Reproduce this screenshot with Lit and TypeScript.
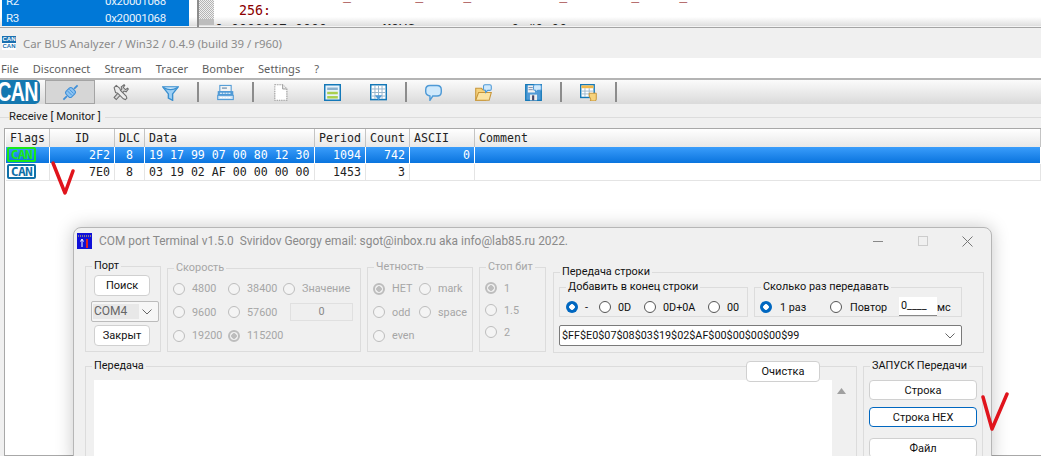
import { LitElement, html, css, svg } from "lit";
import { customElement } from "lit/decorators.js";

const radio = (label: string, state = "", cls = "") => html`<label class="opt ${cls}"><i class="radio ${state}"></i><span>${label}</span></label>`;
const btn = (label: string, cls = "") => html`<button class="btn ${cls}">${label}</button>`;

const chevron = html`<svg class="chev" width="12" height="8" viewBox="0 0 12 8"><path d="M1.5 1.5 6 6l4.5-4.5" fill="none" stroke="#666" stroke-width="1"/></svg>`;

const ICONS: Record<string, unknown> = {
  plug: svg`<path d="M2 22l5-5M17 7l5-5" stroke="#3f8fd8" stroke-width="2.4"/><rect x="6" y="6.500" width="12" height="11" rx="3" transform="rotate(-45 12 12)" fill="#8ec4f2" stroke="#3f8fd8" stroke-width="1.500"/><path d="M8 10l6 6M10.500 7.500l6 6" stroke="#3f8fd8" stroke-width="1.300" fill="none"/>`,
  tools: svg`<path d="M3 19 14 7l-1-3 4-3 1 1-2 3 3 3 3-2 1 1-3 4-3-1L6 22z" fill="#d8d8d8" stroke="#6e6e6e" stroke-width="1.500"/><path d="M3 5l3-3 5 4 1 3 8 8 1 3-2 2-3-1-8-8-3-1z" fill="#ececec" stroke="#6e6e6e" stroke-width="1.500"/>`,
  funnel: svg`<path d="M1 4h22l-8 10v9l-6-3v-6z" fill="#9ed0f5" stroke="#3a8fcf" stroke-width="2"/><path d="M2 5q10 6 20 0" fill="#d6ecfb" stroke="#3a8fcf" stroke-width="1.800"/>`,
  print: svg`<rect x="4" y="2" width="16" height="9" fill="#f4f4f4" stroke="#4f9ad6" stroke-width="1.500"/><rect x="7" y="5" width="7" height="1.500" fill="#5a7ea0"/><rect x="1" y="10" width="22" height="6" fill="#4f9ad6"/><rect x="1" y="16" width="22" height="6" fill="#cfe3f4" stroke="#4f9ad6" stroke-width="1.500"/><path d="M4 13h16M4 19h16" stroke="#fff" stroke-width="1.500" stroke-dasharray="3 1"/>`,
  page: svg`<path d="M4 1h11l6 6v16H4z" fill="#fff" stroke="#9a9a9a" stroke-width="1.500" stroke-dasharray="2 1.200"/><path d="M15 1v6h6" fill="#eee" stroke="#9a9a9a" stroke-width="1.400"/>`,
  form: svg`<rect x="1" y="1" width="22" height="22" fill="#e8f3fb" stroke="#1478b8" stroke-width="2.200"/><rect x="4.500" y="5" width="15" height="3.500" fill="#8ab0cc"/><rect x="4.500" y="11" width="15" height="3.500" fill="#a9cf4e"/><rect x="4.500" y="17" width="15" height="3.500" fill="#a9cf4e"/>`,
  grid: svg`<rect x="1" y="1" width="22" height="21" fill="#fff" stroke="#1478b8" stroke-width="2.200"/><path d="M7 2v19M12 2v19M17 2v19M2 7h20M2 12h20M2 17h20" stroke="#9ab7cc" stroke-width="1.400"/><path d="M7 16h10l-5 7z" fill="#4f9ad6"/>`,
  bubble: svg`<path d="M7 2h10q6 0 6 6v3q0 6-6 6h-6l-4 6v-6Q1 16 1 11V8q0-6 6-6z" fill="#cfe9fc" stroke="#4f9ad6" stroke-width="2"/>`,
  folder: svg`<path d="M1 6h8l2 2h4v15H1z" fill="#f6d27c" stroke="#c7963a" stroke-width="1.500"/><path d="M1 23l4-11h18l-3 11z" fill="#fbe3a2" stroke="#c7963a" stroke-width="1.500"/><path d="M14 1h7q2 0 2 2v4q0 2-2 2h-3l-3 3V9q-3 0-3-2V3q0-2 2-2z" fill="#cfe9fc" stroke="#4f9ad6" stroke-width="1.500"/>`,
  floppy: svg`<path d="M1 1h22v22H1z" fill="#4f9ad6" stroke="#1478b8" stroke-width="1.800"/><rect x="4" y="2" width="12" height="10" fill="#f2f2f2"/><path d="M5 5h6M5 8h6" stroke="#78a" stroke-width="1.300"/><rect x="7" y="15" width="10" height="8" fill="#eee"/><rect x="10" y="16" width="3" height="7" fill="#446"/><path d="M14 1h7q2 0 2 2v4q0 2-2 2h-3l-3 3V9q-3 0-3-2V3q0-2 2-2z" fill="#cfe9fc" stroke="#4f9ad6" stroke-width="1.500"/>`,
  table: svg`<rect x="1" y="1" width="19" height="18" fill="#fff" stroke="#1478b8" stroke-width="2"/><rect x="2" y="2" width="17" height="4" fill="#f0b94c"/><path d="M7 6v12M13 6v12M2 10h17M2 14h17" stroke="#9ab7cc" stroke-width="1.300"/><path d="M13 13h10v8q0 3-2 3h-7q2-1 1-3l-2-4z" fill="#f6d27c" stroke="#c7963a" stroke-width="1.400"/>`,
};
const icon = (name: string, size = 17) => html`<svg class="ico" width="${size}" height="${size}" viewBox="0 0 24 24">${ICONS[name]}</svg>`;

const TOOLS = [
  ["active", "plug"], ["", "tools"], ["", "funnel"], ["sep"], ["", "print"], ["sep"], ["", "page"], ["shift", "form"], ["", "grid"], ["sep"],
  ["", "bubble"], ["", "folder"], ["", "floppy"], ["sep"], ["", "table"], ["sep"],
];
const COLS = ["Flags", "ID", "DLC", "Data", "Period", "Count", "ASCII", "Comment"];
const ROWS = [
  ["sel", "2F2", "8", "19 17 99 07 00 80 12 30", "1094", "742", "0"],
  ["", "7E0", "8", "03 19 02 AF 00 00 00 00", "1453", "3", ""],
];

@customElement("app-root")
export class AppRoot extends LitElement {
  static styles = css`
    :host { display: block; position: relative; width: 1041px; height: 456px; overflow: hidden; background: #fff; font-family: "Noto Sans", sans-serif; }
    * { box-sizing: border-box; }

    .strip { height: 28px; display: flex; overflow: hidden; background: linear-gradient(#fff 60%, #dedede 93%, #f4f4f4 93%, #f4f4f4 96%, #a4a4a4 96%); }
    .regs { margin-left: 2px; width: 187px; height: 26px; background: #0078d7; color: #e8f3fc; font: 11.500px/17px Roboto, sans-serif; letter-spacing: -0.300px; }
    .regs div { display: grid; grid-template-columns: 99px auto; padding-left: 4px; }
    .regs .r2 { margin-top: -7px; }
    .gutter { margin-left: 8px; width: 2px; height: 27px; background: #8c8c8c; }
    .dither { width: 15px; height: 25px; background: linear-gradient(transparent 19px, #bdbdbd 19px), repeating-conic-gradient(#b4b4b4 0 25%, #efefef 0 50%) 0 0 / 2px 2px; }
    .code { flex: 1; height: 25px; overflow: hidden; padding-left: 1px; }
    .code pre { margin: -13px 0 0; font: 13.3px/16px "DejaVu Sans Mono", monospace; color: #8b0000; }
    .code .k { display: block; margin-top: 3px; color: #222; }

    .title { height: 30px; display: flex; align-items: center; gap: 7px; padding-left: 2px; background: #f0f0f0; color: #8b8b8b; font: 11.400px "Noto Sans", sans-serif; }
    .appico { width: 14px; height: 14px; display: flex; flex-direction: column; background: #1a6fb0; color: #fff; font: bold 6px/7px "Liberation Sans", sans-serif; }
    .appico b { display: block; width: 14px; text-align: center; }
    .appico b + b { background: #fff; color: #1a6fb0; }

    .menu { height: 20px; display: flex; gap: 14px; padding-left: 1px; align-items: center; background: #fff; color: #5e5e5e; font: 11.100px "Noto Sans", sans-serif; }

    .bar { height: 26px; display: flex; align-items: center; border-top: 2px solid #b4b4b4; background: linear-gradient(#fbfbfb, #dadada); }
    .can { width: 40px; height: 24px; overflow: hidden; background: #1478b0; border-radius: 0 5px 5px 0; flex: none; color: #fff; position: relative; }
    .can span { position: absolute; right: 2px; top: 0; display: block; font: bold 28px/24px "Liberation Sans", sans-serif; transform: scaleX(0.7); transform-origin: right center; letter-spacing: -1px; }
    .tool { width: 50px; height: 24px; display: flex; align-items: center; justify-content: center; flex: none; }
    .tool.active { background: #d6d6d6; border: 1px solid #a4a4a4; margin-left: 5px; }
    .tool.shift { margin: 0 -4px 0 2px; }
    .sep { width: 2px; height: 20px; background: #8c8c8c; margin: 0 1.500px; flex: none; }
    .ico { display: block; }

    .monitor { position: relative; height: 352px; background: #f0f0f0; padding: 24px 0 0 4px; }
    .mtitle { position: absolute; left: 9px; top: 6px; background: #f0f0f0; padding-right: 4px; font: 11.200px Roboto, sans-serif; color: #222; }
    .rule { position: absolute; left: 0; right: 0; top: 13px; height: 1px; background: #dcdcdc; }
    .tbl { height: 100%; background: #fff; border: 1px solid #a8a8a8; border-right: 0; padding-left: 1px; font: 11.600px "DejaVu Sans Mono", monospace; color: #222; }
    .tr { display: grid; grid-template-columns: 44px 65px 30px 170px 51px 44px 65px 1fr; border-bottom: 1px solid #e4e4e4; height: 17px; line-height: 16px; }
    .tr > div { padding: 0 4px; border-right: 1px solid #e4e4e4; white-space: pre; }
    .tr .n { text-align: right; }
    .tr .c { text-align: center; }
    .tr .d { padding-left: 4px; }
    .tr.head { height: 18px; background: linear-gradient(#fff, #e8e8e8); border-bottom: 0; line-height: 18px; }
    .tr.head > div { border-right: 1px solid #c4c4c4; }
    .tr.head .c2 { text-align: center; }
    .tr.sel { background: linear-gradient(#3a9dfb, #0a74de); color: #fff; border-bottom: 1px solid #fff; }
    .tr.sel > div { border-right-color: #fff; }
    .tr .flag { padding: 0 0 0 1px; }
    .badge { display: block; width: 29px; height: 15px; border: 2px solid #1070a8; border-radius: 2px; color: #1070a8; font: bold 13px/11px "DejaVu Sans Mono", monospace; text-align: center; letter-spacing: -0.700px; }
    .sel .badge { border-color: #18e818; color: #18e818; }

    .win { position: absolute; left: 73px; top: 227px; width: 919px; height: 240px; background: #f0f0f0; border: 1px solid #b6b6b6; border-radius: 8px; box-shadow: 0 0 18px rgba(0,0,0,.22); padding: 2px 0 0 3px; font: 10.800px Roboto, sans-serif; color: #111; }
    .wt { height: 22px; display: flex; align-items: center; gap: 7px; color: #8a8a8a; font: 11.900px Roboto, sans-serif; white-space: pre; }
    .wico { flex: none; }
    .caps { position: absolute; right: 18px; top: 7px; display: flex; gap: 34px; align-items: center; }

    .row { display: flex; align-items: flex-start; gap: 6px; margin: 14px 0 0 8px; }
    .grp { position: relative; border: 1px solid #dcdcdc; flex: none; }
    .grp > .lg { position: absolute; left: 6px; top: -8px; padding: 0 2px; background: #f0f0f0; line-height: 14px; font-size: 10.900px; white-space: nowrap; }
    .off { color: #a6a6a6; }

    .port { width: 76px; height: 86px; padding: 8px 0 0 5px; display: flex; flex-direction: column; align-items: flex-start; }
    .btn { display: block; background: #fff; border: 1px solid #d0d0d0; border-radius: 4px; font: 11px Roboto, sans-serif; color: #111; padding: 0; }
    .port .btn { width: 56px; height: 21px; margin-left: 3px; }
    .combo { width: 68px; height: 21px; margin: 5px 0 3px; border: 1px solid #bbb; border-radius: 2px; background: #f6f6f6; color: #666; display: flex; align-items: center; justify-content: space-between; padding: 0 5px 0 1px; font-size: 12px; }
    .combo span { background: #e8e8e8; height: 15px; width: 46px; line-height: 15px; padding-left: 1px; }

    .opts { display: grid; align-items: center; }
    .opt { display: flex; align-items: center; gap: 7px; white-space: nowrap; }
    .radio { width: 12px; height: 12px; border-radius: 50%; border: 1px solid #bdbdbd; flex: none; background: #f4f4f4; }
    .radio.dis-on { background: radial-gradient(circle, #bdbdbd 2.500px, #f0f0f0 3px); border-color: #bdbdbd; border-width: 2px; }
    .radio.on { background: radial-gradient(circle, #fff 2.500px, #0067c0 3px); border: 0; }
    .radio.en { border-color: #555; background: #fff; }

    .speed { width: 194px; height: 84px; margin-top: 2px; padding: 8px 0 0 5px; }
    .speed .opts { grid-template-columns: 55px 55px auto; grid-auto-rows: 23.500px; }
    .val { width: 63px; height: 18px; margin-left: 7px; background: #efefef; border: 1px solid #e0e0e0; text-align: center; line-height: 16px; color: #888; }
    .par { width: 106px; height: 85px; margin-top: 1px; padding: 9px 0 0 5px; }
    .par .opts { grid-template-columns: 46px auto; grid-auto-rows: 23.500px; }
    .stop { width: 67px; height: 85px; margin-top: 1px; padding: 9px 0 0 5px; }
    .stop .opts { grid-auto-rows: 22px; }

    .tx { width: 431px; height: 81px; margin: 6px 0 0 1px; padding: 14px 0 0 5px; }
    .inner { display: flex; gap: 6px; }
    .g1 { width: 189px; height: 30px; padding: 10px 0 0 6px; display: grid; grid-template-columns: 33px 45px 64px auto; }
    .g2 { width: 208px; height: 30px; padding: 10px 0 0 5px; display: grid; grid-template-columns: 70px 69px 38px auto; align-items: center; }
    .g2 .opt { gap: 8px; }
    .num { height: 19px; background: #fff; border-bottom: 1px solid #888; padding-left: 2px; line-height: 18px; margin-top: -2px; }
    .hex { width: 403px; height: 21px; margin-top: 8px; background: #fff; border: 1px solid #7a7a7a; border-radius: 2px; display: flex; align-items: center; justify-content: space-between; padding: 0 5px 0 2px; }

    .row2 { display: flex; align-items: flex-start; gap: 6px; margin: 13px 0 0 8px; }
    .send { width: 772px; height: 120px; padding: 13px 0 0 8px; display: flex; }
    .ta { width: 738px; height: 110px; background: #fff; }
    .sb { width: 18px; height: 110px; background: #f0f0f0; display: flex; justify-content: center; padding-top: 8px; }
    .clear { position: absolute; left: 660px; top: -6px; width: 74px; height: 21px; }
    .run { width: 120px; height: 120px; padding: 13px 0 0 5px; display: flex; flex-direction: column; gap: 7px; }
    .run .btn { width: 108px; height: 20px; flex: none; }
    .run .focus { border-color: #0067c0; }
    .run .last { margin-top: 4px; }
    .check { position: absolute; pointer-events: none; }
  `;

  render() {
    return html`
      <div class="strip">
        <div class="regs"><div class="r2"><span>R2</span><span>0x20001068</span></div><div><span>R3</span><span>0x20001068</span></div></div>
        <div class="gutter"></div>
        <div class="dither"></div>
        <div class="code"><pre>${"                _        _     _           _        _     _"}
${"   256:"}<span class="k">${"0 0000107 0000       MOVS           r0,#0x00"}</span></pre></div>
      </div>
      <div class="title"><span class="appico"><b>CAN</b><b>CAN</b></span><span>Car BUS Analyzer / Win32 / 0.4.9 (build 39 / r960)</span></div>
      <div class="menu">${["File", "Disconnect", "Stream", "Tracer", "Bomber", "Settings", "?"].map((m) => html`<span>${m}</span>`)}</div>
      <div class="bar">
        <div class="can"><span>CAN</span></div>
        ${TOOLS.map(([k, n]) => (k === "sep" ? html`<i class="sep"></i>` : html`<div class="tool ${k}">${icon(n!)}</div>`))}
      </div>
      <div class="monitor">
        <div class="rule"></div>
        <div class="mtitle">Receive [ Monitor ]</div>
        <div class="tbl">
          <div class="tr head">${COLS.map((c) => html`<div class=${c === "ID" || c === "DLC" ? "c2" : c === "Data" ? "d" : ""}>${c}</div>`)}</div>
          ${ROWS.map(
            (r) => html`<div class="tr ${r[0]}">
              <div class="flag"><span class="badge">CAN</span></div>
              <div class="n">${r[1]}</div><div class="c">${r[2]}</div><div class="d">${r[3]}</div>
              <div class="n">${r[4]}</div><div class="n">${r[5]}</div><div class="n">${r[6]}</div><div></div>
            </div>`
          )}
        </div>
      </div>

      <div class="win">
        <div class="wt">
          <svg class="wico" width="15" height="16" viewBox="0 0 15 16"><rect width="15" height="16" fill="#1010d8"/><path d="M1 3h13" stroke="#f0e040" stroke-dasharray="1 1"/><path d="M5 14V7M3.500 8.500 5 6l1.500 2.500" stroke="#fff" fill="none"/><path d="M10 15V6" stroke="#e02020" stroke-width="2"/></svg>
          <span>COM port Terminal v1.5.0  Sviridov Georgy email: sgot@inbox.ru aka info@lab85.ru 2022.</span>
        </div>
        <div class="caps">
          <svg width="12" height="12" viewBox="0 0 12 12"><path d="M1 6.500h10" stroke="#888"/></svg>
          <svg width="10" height="10" viewBox="0 0 10 10"><rect x=".5" y=".5" width="9" height="9" fill="none" stroke="#ccc"/></svg>
          <svg width="11" height="11" viewBox="0 0 11 11"><path d="M.5.5l10 10M10.500.5l-10 10" stroke="#777"/></svg>
        </div>
        <div class="row">
          <div class="grp port"><span class="lg">Порт</span>${btn("Поиск")}<div class="combo"><span>COM4</span>${chevron}</div>${btn("Закрыт")}</div>
          <div class="grp speed off"><span class="lg">Скорость</span><div class="opts">
            ${radio("4800")}${radio("38400")}${radio("Значение")}
            ${radio("9600")}${radio("57600")}<div class="val">0</div>
            ${radio("19200")}${radio("115200", "dis-on")}
          </div></div>
          <div class="grp par off"><span class="lg">Четность</span><div class="opts">
            ${radio("НЕТ", "dis-on")}${radio("mark")}${radio("odd")}${radio("space")}${radio("even")}
          </div></div>
          <div class="grp stop off"><span class="lg">Стоп бит</span><div class="opts">
            ${radio("1", "dis-on")}${radio("1.5")}${radio("2")}
          </div></div>
          <div class="grp tx"><span class="lg">Передача строки</span>
            <div class="inner">
              <div class="grp g1"><span class="lg">Добавить в конец строки</span>${radio("-", "on")}${radio("0D", "en")}${radio("0D+0A", "en")}${radio("00", "en")}</div>
              <div class="grp g2"><span class="lg">Сколько раз передавать</span>${radio("1 раз", "on")}${radio("Повтор", "en")}<span class="num">0____</span><span>мс</span></div>
            </div>
            <div class="hex"><span>$FF$E0$07$08$03$19$02$AF$00$00$00$00$99</span>${chevron}</div>
          </div>
        </div>
        <div class="row2">
          <div class="grp send"><span class="lg">Передача</span>
            <div class="ta"></div>
            <div class="sb"><svg width="9" height="6" viewBox="0 0 9 6"><path d="M4.500 0 9 6H0z" fill="#a0a0a0"/></svg></div>
            ${btn("Очистка", "clear")}
          </div>
          <div class="grp run"><span class="lg">ЗАПУСК Передачи</span>${btn("Строка")}${btn("Строка HEX", "focus")}${btn("Файл", "last")}</div>
        </div>
      </div>

      <svg class="check" style="left:50px;top:160px" width="26" height="38" viewBox="0 0 26 38"><path d="M3 3 15 33 23 11" fill="none" stroke="#e0141c" stroke-width="3.500" stroke-linecap="round" stroke-linejoin="round"/></svg>
      <svg class="check" style="left:980px;top:392px" width="30" height="42" viewBox="0 0 30 42"><path d="M3 5 12 37 27 2" fill="none" stroke="#e0141c" stroke-width="3.500" stroke-linecap="round" stroke-linejoin="round"/></svg>
    `;
  }
}
